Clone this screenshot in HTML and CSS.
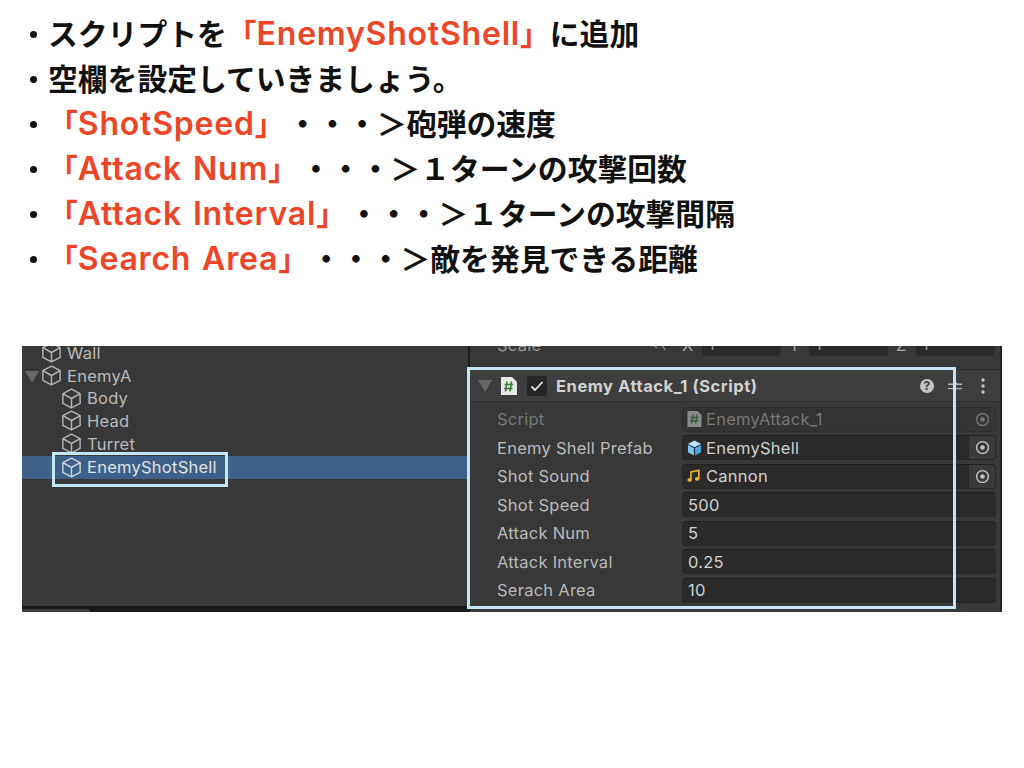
FILE: index.html
```html
<!DOCTYPE html>
<html>
<head>
  <title>EnemyShotShell</title>
  <link rel="stylesheet" href="styles.css">
</head>
<body>
  <svg class="defs">
    <defs>
      <symbol id="cube" viewBox="1.5 0.5 17 19">
        <path d="M10 1.5 L17.8 5.6 V14.4 L10 18.5 L2.2 14.4 V5.6 Z M2.2 5.6 L10 10 L17.8 5.6 M10 10 V18.5" fill="none" stroke="currentColor" stroke-width="1.3" stroke-linejoin="round"/>
      </symbol>
      <symbol id="target" viewBox="0 0 16 16">
        <circle cx="8" cy="8" r="6.3" fill="none" stroke="currentColor" stroke-width="1.5"/>
        <circle cx="8" cy="8" r="2.4" fill="currentColor"/>
      </symbol>
    </defs>
  </svg>

  <ul class="points">
    <li>スクリプトを<span class="hl">「<span class="en">EnemyShotShell</span>」</span>に追加</li>
    <li>空欄を設定していきましょう。</li>
    <li><span class="hl gap">「<span class="en">ShotSpeed</span>」</span>・・・＞砲弾の速度</li>
    <li><span class="hl gap">「<span class="en">Attack Num</span>」</span>・・・＞１ターンの攻撃回数</li>
    <li><span class="hl gap">「<span class="en">Attack Interval</span>」</span>・・・＞１ターンの攻撃間隔</li>
    <li><span class="hl gap">「<span class="en">Search Area</span>」</span>・・・＞敵を発見できる距離</li>
  </ul>

  <div class="shot">
    <div class="hierarchy">
      <div class="tree">
        <div class="node"><svg class="cube"><use href="#cube"/></svg>Wall</div>
        <div class="node"><span class="arrow"></span><svg class="cube"><use href="#cube"/></svg>EnemyA</div>
        <div class="node child"><svg class="cube"><use href="#cube"/></svg>Body</div>
        <div class="node child"><svg class="cube"><use href="#cube"/></svg>Head</div>
        <div class="node child"><svg class="cube"><use href="#cube"/></svg>Turret</div>
        <div class="node child selected"><svg class="cube"><use href="#cube"/></svg>EnemyShotShell</div>
      </div>
      <div class="scrollbar"><div class="thumb"></div></div>
    </div>

    <div class="inspector">
      <div class="transform">
        <span class="transform-label">Scale</span>
        <svg class="link" viewBox="0 0 14 12"><path d="M1 3 L6 6 M5 9 L2 6.5 M8 2 L13 11 M9 6 H13" fill="none" stroke="#8c8c8c" stroke-width="1.4"/></svg>
        <span class="axis">X</span><span class="num">1</span>
        <span class="axis">Y</span><span class="num">1</span>
        <span class="axis">Z</span><span class="num">1</span>
      </div>
      <div class="comp-head">
        <span class="arrow"></span>
        <svg class="file" viewBox="0 0 18 20">
          <path d="M1 1 H12 L17 6 V19 H1 Z" fill="#e8e8e8"/>
          <path d="M7 5.5 L5.5 15.5 M11.5 5.5 L10 15.5 M4.5 8.5 H13 M4 12.5 H12.5" stroke="#2f7d32" stroke-width="1.6" fill="none"/>
        </svg>
        <span class="toggle"><svg viewBox="0 0 14 12"><path d="M1.5 6.5 L5 10 L12.5 2" fill="none" stroke="#e6e6e6" stroke-width="1.8"/></svg></span>
        <span class="comp-title">Enemy Attack_1 (Script)</span>
        <span class="help">?</span>
        <svg class="preset" viewBox="0 0 16 14"><path d="M0 5 H6 M10 5 H16 M0 10 H16 M8 0 V5" stroke="#b4b4b4" stroke-width="1.6" fill="none"/><circle cx="8" cy="4.5" r="2.4" fill="#b4b4b4"/></svg>
        <svg class="kebab" viewBox="0 0 4 16"><circle cx="2" cy="2" r="1.7" fill="#c4c4c4"/><circle cx="2" cy="8" r="1.7" fill="#c4c4c4"/><circle cx="2" cy="14" r="1.7" fill="#c4c4c4"/></svg>
      </div>
      <div class="props">
        <div class="prop dim">
          <span class="label">Script</span>
          <div class="field">
            <svg class="ref-icon" viewBox="0 0 14 16"><path d="M0 0 H10 L14 4 V16 H0 Z" fill="#8a8a8a"/><path d="M5.5 3.5 L4.2 12.5 M9.5 3.5 L8.2 12.5 M3 6.5 H11 M2.6 9.8 H10.6" stroke="#3c5c40" stroke-width="1.4" fill="none"/></svg>
            <span class="value">EnemyAttack_1</span>
            <span class="picker"><svg class="target"><use href="#target"/></svg></span>
          </div>
        </div>
        <div class="prop">
          <span class="label">Enemy Shell Prefab</span>
          <div class="field">
            <svg class="ref-icon" viewBox="0 0 16 16"><path d="M8 0 L15 3.6 L8 7.2 L1 3.6 Z" fill="#b5e2f7"/><path d="M1 4.8 L7.4 8.2 V16 L1 12.6 Z" fill="#7cc6ec"/><path d="M15 4.8 L8.6 8.2 V16 L15 12.6 Z" fill="#4aa5dc"/></svg>
            <span class="value">EnemyShell</span>
            <span class="picker"><svg class="target"><use href="#target"/></svg></span>
          </div>
        </div>
        <div class="prop">
          <span class="label">Shot Sound</span>
          <div class="field">
            <svg class="ref-icon" viewBox="0 -1 16 16"><path d="M4.2 11 V2.6 L12.6 1 V9.6" fill="none" stroke="#e9b234" stroke-width="1.8"/><ellipse cx="2.8" cy="11.2" rx="2.4" ry="2" fill="#e9b234"/><ellipse cx="10.8" cy="10" rx="2.4" ry="2" fill="#e9b234"/></svg>
            <span class="value">Cannon</span>
            <span class="picker"><svg class="target"><use href="#target"/></svg></span>
          </div>
        </div>
        <div class="prop">
          <span class="label">Shot Speed</span>
          <div class="field"><span class="value">500</span></div>
        </div>
        <div class="prop">
          <span class="label">Attack Num</span>
          <div class="field"><span class="value">5</span></div>
        </div>
        <div class="prop">
          <span class="label">Attack Interval</span>
          <div class="field"><span class="value">0.25</span></div>
        </div>
        <div class="prop">
          <span class="label">Serach Area</span>
          <div class="field"><span class="value">10</span></div>
        </div>
      </div>
    </div>

    <div class="frame frame-node"></div>
    <div class="frame frame-comp"></div>
  </div>
</body>
</html>
```

FILE: styles.css
```css
* {box-sizing: border-box}
body {
  margin: 0;
  background: #fff;
  font-family: "Noto Sans CJK JP", sans-serif;
}
.defs {position: absolute; width: 0; height: 0}

.points {
  list-style: none;
  margin: 0;
  padding: 10px 0 2px 48px;
  font-size: 29.8px;
  font-weight: 700;
  line-height: 45px;
  color: #111;
}
.points li {position: relative; height: 45px; white-space: nowrap}
.points li::before {
  content: "";
  position: absolute;
  left: -18px;
  top: 21px;
  width: 7px;
  height: 7px;
  border-radius: 50%;
  background: #111;
}
.hl {color: #ee4527}
.gap {margin-right: 18px}
.en {
  font-family: Inter, "Liberation Sans", sans-serif;
  font-size: 32px;
  font-weight: 600;
  letter-spacing: 0.8px;
  word-spacing: 2px;
}

.shot {
  position: relative;
  display: flex;
  width: 980px;
  height: 266px;
  margin: 64px 0 0 22px;
  overflow: hidden;
  background: #383838;
  font-family: Inter, "Liberation Sans", sans-serif;
  font-size: 16.5px;
  letter-spacing: 0.25px;
  color: #bababa;
}

/* left: hierarchy */
.hierarchy {
  display: flex;
  flex-direction: column;
  width: 446px;
  justify-content: space-between;
}
.tree {margin-top: -4.5px}
.node {
  position: relative;
  display: flex;
  align-items: center;
  height: 22.7px;
  padding-left: 20px;
  white-space: nowrap;
}
.node.child {padding-left: 40px}
.cube {width: 19px; height: 21px; margin-right: 6px; color: #b4b4b4; flex: none}
.node .arrow {position: absolute; left: 3px; top: 7px}
.arrow {
  width: 0;
  height: 0;
  border-left: 7px solid transparent;
  border-right: 7px solid transparent;
  border-top: 12px solid #666;
}
.selected {margin-top: 1px; background: #3d5f88; color: #e2e2e2}
.selected .cube {color: #cfd5dc}
.scrollbar {height: 6px; background: #1a1a1a; padding-top: 3px}
.thumb {width: 68px; height: 3px; background: #3c3c3c; border-top-right-radius: 3px}

/* right: inspector */
.inspector {
  width: 534px;
  border-left: 2px solid #1d1d1d;
  border-right: 2px solid #232323;
}
.transform {
  display: flex;
  align-items: center;
  height: 23px;
  margin-top: -13px;
  padding: 0 4px 0 27px;
  color: #999;
}
.transform-label {width: 155px}
.link {width: 14px; height: 12px; margin-right: 16px}
.axis {width: 20px; color: #aaa}
.num {
  width: 79px;
  height: 23px;
  margin-right: 8px;
  padding-left: 6px;
  background: #2a2a2a;
  border-radius: 4px;
  line-height: 23px;
}
.num:last-child {margin-right: 0}
.comp-head {
  display: flex;
  align-items: center;
  height: 33px;
  margin-top: 13px;
  padding-left: 8px;
  background: #3e3e3e;
  border-top: 1px solid #2a2a2a;
  border-bottom: 1px solid #2f2f2f;
}
.file {width: 18px; height: 20px; margin-left: 8px}
.toggle {
  display: flex;
  align-items: center;
  justify-content: center;
  width: 20px;
  height: 20px;
  margin-left: 9px;
  background: #262626;
  border-radius: 3px;
}
.toggle svg {width: 14px; height: 12px}
.comp-title {flex: 1; margin-left: 9px; font-weight: 700; letter-spacing: 0.55px; color: #d2d2d2}
.help {
  width: 14px;
  height: 14px;
  border-radius: 50%;
  background: #c4c4c4;
  color: #3e3e3e;
  font-size: 12px;
  font-weight: 700;
  line-height: 14px;
  text-align: center;
}
.preset {width: 14px; height: 14px; margin-left: 14px}
.kebab {width: 4px; height: 16px; margin: 0 15px 0 19px}

.props {padding-top: 3px}
.prop {
  display: flex;
  align-items: center;
  height: 28.5px;
  padding: 0 4px 0 27px;
}
.label {width: 185px; flex: none}
.field {
  display: flex;
  align-items: center;
  flex: 1;
  height: 25px;
  padding-left: 5px;
  background: #2a2a2a;
  border: 1px solid #262626;
  border-top-color: #1f1f1f;
  border-radius: 4px;
  color: #d0d0d0;
}
.ref-icon {width: 15px; height: 16px; margin: 0 4px 0 -1px; flex: none}
.value {flex: 1}
.picker {
  display: flex;
  align-items: center;
  justify-content: center;
  width: 26px;
  height: 23px;
  background: #3a3a3a;
  border-radius: 0 3px 3px 0;
}
.target {width: 15px; height: 15px; color: #c4c4c4}
.dim {color: #777}
.dim .field {background: #333; border-color: #2e2e2e; color: #777}
.dim .picker {background: #363636}
.dim .target {color: #777}

/* highlight frames over the screenshot */
.frame {position: absolute; border: 3px solid #c4e6f4}
.frame-node {left: 30px; top: 106px; width: 176px; height: 35px}
.frame-comp {left: 445px; top: 21px; width: 489px; height: 242px}
```
